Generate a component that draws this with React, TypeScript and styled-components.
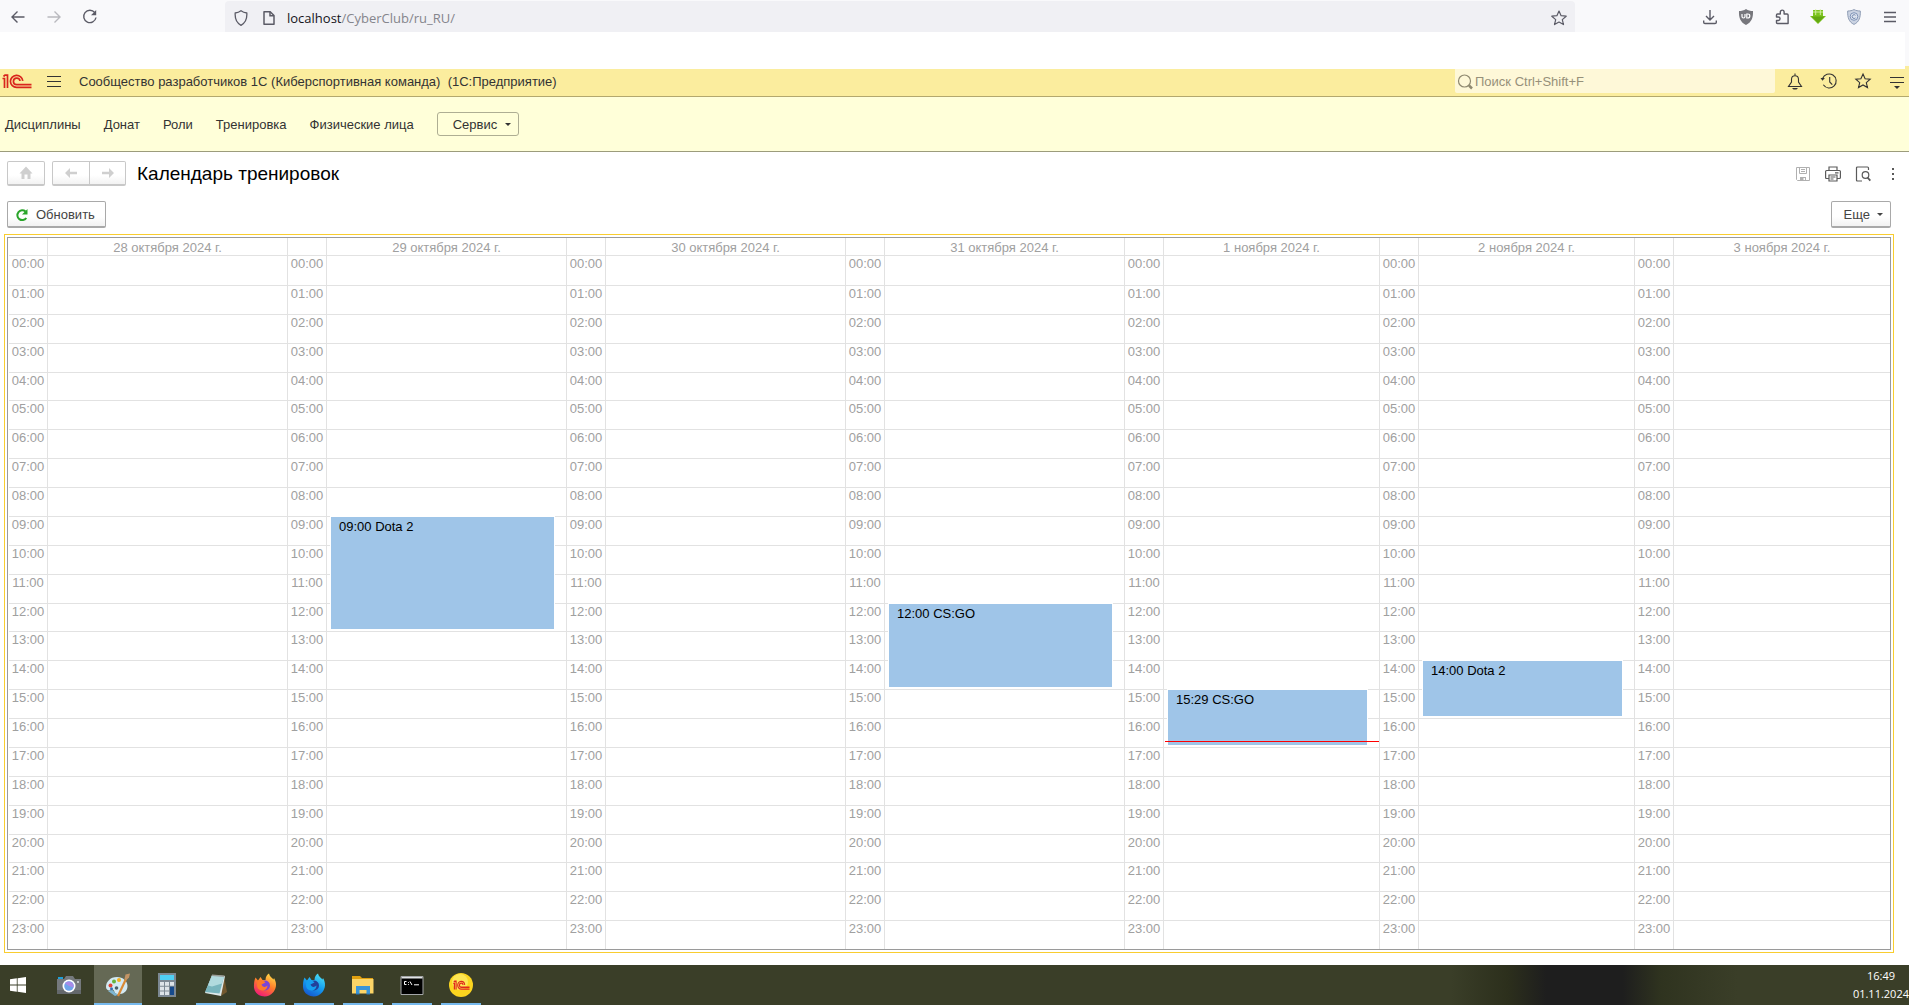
import React from "react";
import styled, { createGlobalStyle, css } from "styled-components";

const ui = `"Liberation Sans", Arial, sans-serif`;
const system = `"Open Sans", "Noto Sans", sans-serif`;

const GlobalStyle = createGlobalStyle`
  *, *::before, *::after { box-sizing: border-box; }
  body { margin: 0; background: #fff; font: 13px/16px ${ui}; color: #333; }
  button, input { font: inherit; color: inherit; margin: 0; }
  svg { display: block; flex: none; }
`;

const Page = styled.div`
  display: flex;
  flex-direction: column;
  min-height: 100vh;
`;

/* ---------- browser chrome ---------- */

const BrowserBar = styled.header`
  display: flex;
  align-items: stretch;
  height: 32px;
  background: #f9f9fb;
  color: #5b5b66;
`;

const BrowserNav = styled.div`
  display: flex;
  align-items: center;
  gap: 20px;
  width: 225px;
  padding-left: 10px;
  padding-top: 2px;
`;

const IconButton = styled.button<{ $size?: number; $faded?: boolean }>`
  display: flex;
  align-items: center;
  justify-content: center;
  width: ${(p) => p.$size ?? 16}px;
  height: ${(p) => p.$size ?? 16}px;
  padding: 0;
  border: 0;
  background: none;
  opacity: ${(p) => (p.$faded ? 0.4 : 1)};
`;

const UrlBar = styled.div`
  display: flex;
  flex: 1;
  align-items: center;
  gap: 12px;
  margin-top: 1px;
  padding: 2px 8px 0;
  border-radius: 4px 4px 0 0;
  background: #f0f0f4;
`;

const UrlText = styled.div`
  flex: 1;
  margin-left: -2px;
  font: 13px/18px ${system};
  color: #85858c;
  outline: 0;
  & > span { color: #15141a; }
`;

const BrowserTools = styled.div`
  display: flex;
  align-items: center;
  justify-content: flex-end;
  gap: 20px;
  width: 334px;
  padding: 2px 11px 0 0;
`;

const ChromeGap = styled.div`
  display: flex;
  justify-content: flex-end;
  height: 37px;
  &::after {
    content: "";
    width: 4px;
    background: linear-gradient(#f9f9fb 34px, #fbed9e 34px);
  }
`;

/* ---------- application header ---------- */

const AppBar = styled.div`
  display: flex;
  align-items: flex-start;
  height: 28px;
  background: #fbed9e;
  border-bottom: 1px solid #b3a86d;
`;

const AppTitle = styled.div`
  display: flex;
  flex: 1;
  align-items: center;
  height: 25px;
  padding-left: 2px;
`;

const MenuButton = styled(IconButton)`
  margin: 0 18px 0 15px;
`;

const Search = styled.label`
  display: flex;
  align-items: center;
  gap: 2px;
  width: 320px;
  height: 24px;
  padding: 1px 0 0 2px;
  border-radius: 0 0 2px 2px;
  background: #fef8d8;
`;

const SearchInput = styled.input`
  flex: 1;
  padding: 0;
  border: 0;
  outline: 0;
  background: none;
  &::placeholder { color: #96907a; opacity: 1; }
`;

const AppTools = styled.div`
  display: flex;
  align-items: center;
  justify-content: flex-end;
  gap: 14px;
  width: 134px;
  height: 24px;
  padding-right: 2px;
`;

const Sections = styled.nav`
  display: flex;
  align-items: center;
  gap: 23px;
  height: 55px;
  padding-left: 5px;
  background: #ffffd9;
  border-bottom: 1px solid #9c9c7c;
`;

const SectionLink = styled.a`
  padding-top: 1px;
  color: #333;
  text-decoration: none;
`;

const ServiceButton = styled.button`
  display: flex;
  align-items: center;
  gap: 8px;
  height: 24px;
  padding: 1px 7px 0 15px;
  border: 1px solid #aeae93;
  border-radius: 3px;
  background: #ffffd9;
`;

const Caret = styled.span`
  border: 3px solid transparent;
  border-top-color: currentColor;
  border-bottom: 0;
`;

/* ---------- form ---------- */

const Form = styled.main`
  display: flex;
  flex: 1;
  flex-direction: column;
  padding: 9px 15px 12px 4px;
`;

const FormHead = styled.div`
  display: flex;
  align-items: center;
  height: 25px;
  padding-left: 3px;
`;

const raised = css`
  border: 1px solid #b0b0b0;
  border-bottom: 2px solid #a0a0a0;
  border-radius: 2px;
  background: linear-gradient(#fff 60%, #f2f2f2);
`;

const NavButton = styled.button`
  ${raised};
  display: flex;
  align-items: center;
  justify-content: center;
  width: 38px;
  height: 25px;
  padding: 0;
  border-color: #c8c8c8;
  color: #cfcfcf;
`;

const NavPair = styled.div`
  display: flex;
  margin: 0 11px 0 7px;
  & > button { border-radius: 2px 0 0 2px; }
  & > button + button { border-left: 0; border-radius: 0 2px 2px 0; width: 36px; }
`;

const Title = styled.h1`
  flex: 1;
  margin: 0;
  font: 19px/24px ${ui};
  color: #000;
`;

const FormTools = styled.div`
  display: flex;
  align-items: center;
  gap: 14px;
  margin-right: -7px;
  color: #5a5a5a;
`;

const Commands = styled.div`
  display: flex;
  justify-content: space-between;
  margin: 15px 3px 6px;
`;

const CommandButton = styled.button`
  ${raised};
  display: flex;
  align-items: center;
  gap: 7px;
  height: 27px;
  padding: 1px 10px 0 7px;
  border-color: #a9a9a9;
  color: #444;
`;

const MoreButton = styled(CommandButton)`
  padding: 1px 7px 0 12px;
`;

/* ---------- calendar ---------- */

const line = "1px solid #e2e2e2";

const Focus = styled.div`
  display: flex;
  flex: 1;
  padding: 2px;
  border: 1px solid #f9cd2f;
`;

const Calendar = styled.table`
  display: grid;
  flex: 1;
  grid-template-columns: repeat(4, 39px minmax(0, 10fr)) repeat(3, 39px minmax(0, 9fr));
  grid-template-rows: 18px repeat(24, minmax(18px, 1fr));
  padding-left: 1px;
  border: 1px solid #9a9a9a;
  color: #a0a0a0;
`;

const Rows = styled.tbody`
  display: contents;
`;

const Head = styled.thead`
  display: contents;
`;

const Row = styled.tr`
  display: contents;
  &:first-child > * { border-top: 0; }
`;

const DayName = styled.th`
  padding: 2px 0 0;
  border-right: ${line};
  border-bottom: ${line};
  font-weight: normal;
  text-align: center;
  line-height: 15px;
  &:last-child { border-right: 0; }
`;

const Hour = styled.th`
  padding: 0;
  border-top: ${line};
  border-right: ${line};
  font-weight: normal;
  text-align: center;
  line-height: 16px;
`;

const Slot = styled.td`
  position: relative;
  padding: 0;
  border-top: ${line};
  border-right: ${line};
  &:last-child { border-right: 0; }
`;

const Event = styled.div<{ $hours: number }>`
  position: absolute;
  z-index: 1;
  top: 0;
  left: 4px;
  right: 12px;
  height: calc((100% + 1px) * ${(p) => p.$hours} - 3px);
  padding: 2px 8px;
  background: #9fc5e8;
  box-shadow: 0 0 0 1px #fff;
  color: #000;
`;

const Now = styled.div<{ $minute: number }>`
  position: absolute;
  z-index: 2;
  top: calc(100% * ${(p) => p.$minute} / 60 - 1px);
  left: 1px;
  right: 0;
  height: 1px;
  background: #f00;
`;

/* ---------- taskbar ---------- */

const Taskbar = styled.footer`
  display: flex;
  align-items: stretch;
  height: 40px;
  background: linear-gradient(90deg, #3a3e28 76%, #2c2f1c 79%, #1e1e1e 81%, #1e1e1e 85%, #2f331f 87%, #3a3e28 91%);
`;

const StartButton = styled.button`
  display: flex;
  align-items: center;
  width: 45px;
  padding: 0 0 0 10px;
  border: 0;
  background: none;
`;

const Tasks = styled.div`
  display: flex;
  flex: 1;
  gap: 1px;
`;

const Task = styled.button<{ $state?: "open" | "active" }>`
  display: flex;
  align-items: center;
  justify-content: center;
  width: 48px;
  padding: 0;
  border: 0;
  background:
    linear-gradient(#76b9ed, #76b9ed) bottom / ${(p) => (p.$state === "active" ? "48px" : p.$state === "open" ? "40px" : "0")} 2px no-repeat,
    ${(p) => (p.$state === "active" ? "#656955" : "transparent")};
`;

const Clock = styled.time`
  display: flex;
  flex-direction: column;
  align-items: center;
  padding-top: 2px;
  font: 11px/18px ${system};
  color: #fff;
`;

/* ---------- drawings ---------- */

type IconProps = { size?: number; children: React.ReactNode; w?: number; box?: string; stroke?: number };
const Svg = ({ size = 16, w, box = "0 0 16 16", stroke = 1, children }: IconProps) => (
  <svg width={w ?? size} height={size} viewBox={box} fill="none" stroke="currentColor" strokeWidth={stroke} aria-hidden>
    {children}
  </svg>
);

const Back = () => <Svg stroke={1.4}><path d="M14.5 8H2M7.5 2.5L2 8l5.500 5.500" /></Svg>;
const Forward = () => <Svg stroke={1.4}><path d="M1.500 8H14M8.500 2.500L14 8l-5.500 5.500" /></Svg>;
const Reload = () => <Svg stroke={1.4}><path d="M12.800 3.600A6.200 6.200 0 1 0 14 8.500" /><path d="M14.200 1v5.200H9z" fill="currentColor" stroke="none" /></Svg>;
const Shield = () => <Svg stroke={1.3}><path d="M8 .8c1.800 1.400 3.600 2 5.800 2.200C14.200 8.500 12.500 13 8 15.300 3.500 13 1.800 8.500 2.200 3 4.400 2.800 6.200 2.200 8 .8z" /></Svg>;
const Doc = () => <Svg stroke={1.5}><path d="M3 1.700h6.200L13 5.500v8.800H3z" strokeLinejoin="round" /><path d="M9 1.700v4h4" /></Svg>;
const starPath = "M8 1l2.100 4.700 5.100.5-3.900 3.400 1.200 5L8 12l-4.500 2.600 1.200-5L.8 6.200l5.100-.5z";
const Star = ({ stroke = 1.2 }) => <Svg stroke={stroke}><path d={starPath} strokeLinejoin="round" /></Svg>;
const Download = () => <Svg stroke={1.4}><path d="M8 1v9.500M4 7l4 4 4-4M1.700 11.500v1.700q0 1.300 1.300 1.300h10q1.300 0 1.300-1.300v-1.700" /></Svg>;
const Ublock = () => (
  <Svg>
    <path d="M8 0c2 1.500 4.500 2 7 2 .3 6-1 11-7 14C2 13 .7 8 1 2c2.500 0 5-.5 7-2z" fill="#77777c" stroke="none" />
    <path d="M4 5v2.500q0 1.500 1.500 1.500T7 7.500V5M8.800 5v4h1q2 0 2-2t-2-2z" stroke="#fff" strokeWidth="1.200" />
  </Svg>
);
const Puzzle = () => <Svg stroke={1.4}><path d="M2.500 8V6q0-1 1-1H6.300V3a1.900 1.900 0 0 1 3.800 0v2h3q1 0 1 1v8.500H3.500q-1 0-1-1v-2h1.800a1.700 1.700 0 0 0 0-3.500z" strokeLinejoin="round" /></Svg>;
const GreenArrow = () => (
  <Svg>
    <path d="M3 1h10v6h3l-8 8-8-8h3z" fill="#7cc41f" stroke="none" />
    <path d="M3 3h10M5.700 0v6M10.300 0v6" stroke="#d8f0a8" strokeWidth=".9" />
    <path d="M1.500 7.500h13L8 14z" fill="#64a812" stroke="none" />
  </Svg>
);
const BlueShield = () => (
  <Svg>
    <path d="M8 .6C10 1.600 12 2 14.300 2 14.600 8 13.300 13 8 15.400 2.700 13 1.400 8 1.700 2 4 2 6 1.600 8 .6z" fill="#cbd3e2" stroke="#8f9db5" />
    <circle cx="8" cy="7.500" r="3.800" fill="#dfe5ef" stroke="#8094b8" />
    <path d="M9.500 6.300a1.900 1.900 0 1 0 0 2.600" stroke="#7086ad" />
  </Svg>
);
const Burger = () => <Svg stroke={1.5}><path d="M2 3.500h12M2 8h12M2 12.500h12" /></Svg>;

const logoOne = "M.5 4.500H2.500V14M1.500 2.500L3 1.200H5.500V14";
const logoC = "M20.800 6.800A6.200 6 0 1 0 14.600 13.400H29.500M18 7A3.300 3.200 0 1 0 14.600 10.600H29.500";
const Logo = () => (
  <svg width="30" height="15" viewBox="0 0 30 15" fill="none" stroke="#d9251d" strokeWidth="1.700" role="img" aria-label="1С">
    <path d={logoOne} />
    <path d={logoC} />
  </svg>
);
const AppMenu = () => <Svg box="0 0 14 14" size={14}><path d="M0 1.500h14M0 6.500h14M0 11.500h14" stroke="#333" /></Svg>;
const Magnifier = () => <Svg stroke={1.2}><g stroke="#8f8970"><circle cx="7.500" cy="7" r="6" /><path d="M12 11.500l3 3" strokeWidth="2.500" /></g></Svg>;
const Bell = () => <Svg size={20} box="0 0 20 20" stroke={1.1}><path d="M3.500 15.500h13L13.500 11V8.500q0-3.700-3.500-3.700T6.500 8.500V11zM10 2.500v2.300" /><path d="M7 17h6l-1.500 1.500h-3z" fill="currentColor" stroke="none" /></Svg>;
const History = () => <Svg size={20} box="0 0 20 20" stroke={1.1}><path d="M3.600 7.500A7 7 0 1 1 4.300 13.800M10.700 6v5l2.600 2.600" /><path d="M1.500 7h4.400L3.500 9.800z" fill="currentColor" stroke="none" /></Svg>;
const BigStar = () => <Svg size={20} box="-2 -2 20 20" stroke={1.1}><path d={starPath} /></Svg>;
const Options = () => <Svg size={20} box="0 0 20 20"><path d="M3 6.500h14M3 11.500h14" /><path d="M7 15h6l-3 3z" fill="currentColor" stroke="none" /></Svg>;

const Home = () => <Svg><path d="M8 1.500L1.500 8.500H3.500V14H6.500V9.500h3V14h3V8.500h2z" fill="currentColor" stroke="none" /></Svg>;
const ArrowL = () => <Svg><path d="M2 8l5-5v3.800h7v2.400H7V13z" fill="currentColor" stroke="none" /></Svg>;
const ArrowR = () => <Svg><path d="M14 8L9 3v3.800H2v2.400h7V13z" fill="currentColor" stroke="none" /></Svg>;
const Refresh = () => <Svg size={14} box="0 0 14 14" stroke={2}><g stroke="#2aa52a"><path d="M10.500 3.500A4.900 4.900 0 1 0 11.300 10" /><path d="M12.500 1v5.500H7z" fill="#2aa52a" stroke="none" /></g></Svg>;
const Save = () => <Svg><g stroke="#b0b0b0"><path d="M1.500 1.500h13v13h-12l-1-1z" /><path d="M4.500 1.500v6h7v-6M6 3.500h4M6 5.500h4" /><path d="M5 11h6v4H5z" fill="#b0b0b0" stroke="none" /><path d="M8.500 12h1.500v2H8.500z" fill="#fff" stroke="none" /></g></Svg>;
const Print = () => <Svg stroke={1.2}><path d="M4 4.500V1h8v3.500M4 12.500H1.600q-1 0-1-1v-6q0-1 1-1h12.800q1 0 1 1v6q0 1-1 1H12M4 9h8v6H4zM5.500 11h5M5.500 13h3M10 6.800h3.500" /></Svg>;
const Preview = () => <Svg stroke={1.2}><path d="M7 15H2.500q-1 0-1-1V2q0-1 1-1h10q1 0 1 1v2" /><circle cx="10.500" cy="9" r="3.300" /><path d="M12.500 11.500l2.800 3.200" strokeWidth="1.800" /></Svg>;
const Dots = () => <Svg><path d="M7 2h2v2H7zM7 7h2v2H7zM7 12h2v2H7z" fill="currentColor" stroke="none" /></Svg>;

const Windows = () => <Svg><path d="M0 2.300l6.800-1v6.300H0zM7.600 1.200L16 0v7.600H7.600zM0 8.400h6.800v6.300l-6.800-1zM7.600 8.400H16V16l-8.400-1.200z" fill="#fff" stroke="none" /></Svg>;

const Camera = () => (
  <Svg size={24} box="0 0 24 24">
    <g stroke="none">
      <path d="M1 4h5v3H1z" fill="#1f9fd8" />
      <path d="M0 6h7l2-3h7l2 3h6v15H0z" fill="#75797d" />
      <path d="M0 17h24v4H0z" fill="#64686c" />
      <circle cx="12" cy="13" r="6.500" fill="#fff" />
      <circle cx="12" cy="13" r="4.800" fill="#6fa4ea" />
      <path d="M8 10.500a4.800 4.800 0 0 1 8.500 4L12 13z" fill="#a98be8" />
      <path d="M20 8h2v2h-2z" fill="#bfc3c6" />
    </g>
  </Svg>
);
const Paint = () => (
  <Svg size={24} box="0 0 24 24">
    <g stroke="none">
      <path d="M11 4C4 4 0 9 0 14c0 3 3 4 5 3s3 0 3.500 2c1 4 13 3 13-6C21.500 8 17 4 11 4z" fill="#d3eaf4" />
      <path d="M2 18c2 0 4-2 5.500 0S10 22 15 20.500L9 23z" fill="#7db6d1" />
      <circle cx="4.500" cy="12.500" r="2" fill="#df4437" />
      <circle cx="8" cy="8.500" r="2" fill="#66b33e" />
      <circle cx="13" cy="7" r="2" fill="#f2b01e" />
      <circle cx="5.500" cy="15.800" r="1.500" fill="#356fb5" />
      <circle cx="10.500" cy="15" r="1.800" fill="#4b5f6b" />
    </g>
    <path d="M12 23L20 6" stroke="#d98a35" strokeWidth="2.200" />
    <path d="M18.500 6l1-4.500L24 .5l-1 4-2.500 2.500z" fill="#c39465" stroke="none" />
  </Svg>
);
const Calculator = () => (
  <Svg size={24} w={18} box="0 0 18 24">
    <g stroke="none">
      <path d="M0 0h18v24H0z" fill="#7c8893" />
      <path d="M2 2h14v5H2z" fill="#4fd0f5" />
      <path d="M2 9h4v3.700H2zM7 9h4v3.700H7zM12 9h4v3.700h-4zM2 13.700h4v3.700H2zM7 13.700h4v3.700H7zM2 18.400h4V22H2zM7 18.400h4V22H7z" fill="#dde3e8" />
      <path d="M12 13.700h4V22h-4z" fill="#164a8c" />
    </g>
  </Svg>
);
const Notepad = () => (
  <Svg size={24} box="0 0 24 24">
    <g stroke="none">
      <path d="M20 3l3 16-6 4z" fill="#73582f" />
      <path d="M8 2l13 1-4 20-16-3z" fill="#dfe9ea" />
      <path d="M8 2.500l12 1-4.500 17L1 19z" fill="#78b5bd" />
      <path d="M8 2.500l12 1-2 7-10 3-4-1z" fill="#b1dade" />
      <path d="M8 1.500l12.500 1v1.500L8 3z" fill="#9b9d98" />
    </g>
  </Svg>
);
const Fox = ({ blue = false }) => {
  const id = blue ? "foxBlue" : "foxRed";
  const [a, b, c, core] = blue ? ["#4fe3f5", "#159ff0", "#1557cf", "#23409a"] : ["#ffe14a", "#ff7a2a", "#f0197a", "#7a45d8"];
  return (
    <Svg size={24} box="0 0 24 24">
      <defs>
        <linearGradient id={id} x1=".8" y1="0" x2=".3" y2="1"><stop stopColor={a} /><stop offset=".5" stopColor={b} /><stop offset="1" stopColor={c} /></linearGradient>
      </defs>
      <g stroke="none">
        <path d="M2.500 4.500l2.500 3L7.500 4l2 3h3c0-3 1.500-5.500 3.500-6.500.5 3 3 4 4.500 6l.5-1.500c3 5 2.500 10-.5 14C17 23.500 12 24 8.500 23 3 21.500.5 17 1 12c0-3 .5-5 1.500-7.500z" fill={`url(#${id})`} />
        <circle cx="12" cy="12.500" r="5" fill={core} />
        <path d="M5 7.500c3-1 6 0 7.500 2l-4 2c1 3 4 3 6 1 0 4-4 6-7.500 4.500C3.500 15.500 3.500 11 5 7.500z" fill={b} />
      </g>
    </Svg>
  );
};
const Explorer = () => (
  <Svg size={24} box="0 0 24 24">
    <g stroke="none">
      <path d="M1 3h8l2 2h11v15H1z" fill="#e0a010" />
      <path d="M1 6h21.500v14.500H1z" fill="#fbd467" />
      <path d="M5 13h14v8h-3.500v-4h-7v4H5z" fill="#3a95d8" />
      <path d="M5 20.500h3.500v1H5zM15.500 20.500H19v1h-3.500z" fill="#2777b8" />
    </g>
  </Svg>
);
const Console = () => (
  <Svg size={24} box="0 0 24 24">
    <path d="M1 3.500h22v18H1z" fill="#000" stroke="#a4a6a8" />
    <path d="M1.500 4h21v1.500h-21z" fill="#e2e4e5" stroke="none" />
    <path d="M6.500 8.500H4.500v3h2M8.500 9v.8M8.500 11v.8M10 8.500l2 3.500M14 11.800h5" stroke="#fff" />
  </Svg>
);
const OneC = () => (
  <Svg size={24} box="0 0 24 24">
    <circle cx="12" cy="12" r="12" fill="#fbd51f" stroke="none" />
    <circle cx="11" cy="9" r="8" fill="#fde655" stroke="none" />
    <g transform="translate(4 7.500) scale(.56 .64)" stroke="#e0281c" strokeWidth="2.100">
      <path d={logoOne} />
      <path d={logoC} />
    </g>
  </Svg>
);

/* ---------- data ---------- */

const sections = ["Дисциплины", "Донат", "Роли", "Тренировка", "Физические лица"];

const days = [
  "28 октября 2024 г.",
  "29 октября 2024 г.",
  "30 октября 2024 г.",
  "31 октября 2024 г.",
  "1 ноября 2024 г.",
  "2 ноября 2024 г.",
  "3 ноября 2024 г.",
];

const trainings = [
  { day: 1, row: 9, hours: 4, text: "09:00 Dota 2" },
  { day: 3, row: 12, hours: 3, text: "12:00 CS:GO" },
  { day: 4, row: 15, hours: 2, text: "15:29 CS:GO" },
  { day: 5, row: 14, hours: 2, text: "14:00 Dota 2" },
];

const now = { day: 4, hour: 16, minute: 49 };

const hours = Array.from({ length: 24 }, (_, h) => h);

const tasks: { name: string; icon: React.ReactNode; state?: "open" | "active" }[] = [
  { name: "Камера", icon: <Camera /> },
  { name: "Paint", icon: <Paint />, state: "active" },
  { name: "Калькулятор", icon: <Calculator /> },
  { name: "Блокнот", icon: <Notepad />, state: "open" },
  { name: "Firefox", icon: <Fox />, state: "open" },
  { name: "Firefox Developer Edition", icon: <Fox blue />, state: "open" },
  { name: "Проводник", icon: <Explorer />, state: "open" },
  { name: "Командная строка", icon: <Console />, state: "open" },
  { name: "1С:Предприятие", icon: <OneC />, state: "open" },
];

export default function App() {
  return (
    <Page>
      <GlobalStyle />
      <BrowserBar>
        <BrowserNav>
          <IconButton aria-label="Назад"><Back /></IconButton>
          <IconButton aria-label="Вперёд" $faded><Forward /></IconButton>
          <IconButton aria-label="Обновить страницу"><Reload /></IconButton>
        </BrowserNav>
        <UrlBar>
          <Shield />
          <Doc />
          <UrlText role="textbox" aria-label="Адрес" contentEditable suppressContentEditableWarning spellCheck={false}>
            <span>localhost</span>/CyberClub/ru_RU/
          </UrlText>
          <IconButton aria-label="Добавить в закладки"><Star /></IconButton>
        </UrlBar>
        <BrowserTools>
          <IconButton aria-label="Загрузки"><Download /></IconButton>
          <IconButton aria-label="uBlock"><Ublock /></IconButton>
          <IconButton aria-label="Расширения"><Puzzle /></IconButton>
          <IconButton aria-label="Скачать"><GreenArrow /></IconButton>
          <IconButton aria-label="Защита"><BlueShield /></IconButton>
          <IconButton aria-label="Меню браузера"><Burger /></IconButton>
        </BrowserTools>
      </BrowserBar>
      <ChromeGap />

      <AppBar>
        <AppTitle>
          <Logo />
          <MenuButton $size={14} aria-label="Главное меню"><AppMenu /></MenuButton>
          Сообщество разработчиков 1С (Киберспортивная команда)&nbsp; (1С:Предприятие)
        </AppTitle>
        <Search>
          <Magnifier />
          <SearchInput aria-label="Поиск" placeholder="Поиск Ctrl+Shift+F" />
        </Search>
        <AppTools>
          <IconButton $size={20} aria-label="Уведомления"><Bell /></IconButton>
          <IconButton $size={20} aria-label="История"><History /></IconButton>
          <IconButton $size={20} aria-label="Избранное"><BigStar /></IconButton>
          <IconButton $size={20} aria-label="Настройки"><Options /></IconButton>
        </AppTools>
      </AppBar>
      <Sections>
        {sections.map((name) => (
          <SectionLink key={name} href="#">{name}</SectionLink>
        ))}
        <ServiceButton>Сервис<Caret /></ServiceButton>
      </Sections>

      <Form>
        <FormHead>
          <NavButton aria-label="Начальная страница"><Home /></NavButton>
          <NavPair>
            <NavButton aria-label="Предыдущая"><ArrowL /></NavButton>
            <NavButton aria-label="Следующая"><ArrowR /></NavButton>
          </NavPair>
          <Title>Календарь тренировок</Title>
          <FormTools>
            <IconButton aria-label="Сохранить"><Save /></IconButton>
            <IconButton aria-label="Печать"><Print /></IconButton>
            <IconButton aria-label="Просмотр"><Preview /></IconButton>
            <IconButton aria-label="Действия"><Dots /></IconButton>
          </FormTools>
        </FormHead>
        <Commands>
          <CommandButton><Refresh />Обновить</CommandButton>
          <MoreButton>Еще<Caret /></MoreButton>
        </Commands>
        <Focus>
          <Calendar>
            <Head>
              <Row>
                {days.map((day) => (
                  <React.Fragment key={day}>
                    <DayName aria-label="Время" />
                    <DayName scope="col">{day}</DayName>
                  </React.Fragment>
                ))}
              </Row>
            </Head>
            <Rows>
              {hours.map((h) => (
                <Row key={h}>
                  {days.map((day, d) => {
                    const training = trainings.find((t) => t.day === d && t.row === h);
                    return (
                      <React.Fragment key={day}>
                        <Hour scope="row">{String(h).padStart(2, "0")}:00</Hour>
                        <Slot>
                          {training && <Event $hours={training.hours}>{training.text}</Event>}
                          {now.day === d && now.hour === h && <Now $minute={now.minute} />}
                        </Slot>
                      </React.Fragment>
                    );
                  })}
                </Row>
              ))}
            </Rows>
          </Calendar>
        </Focus>
      </Form>

      <Taskbar>
        <StartButton aria-label="Пуск"><Windows /></StartButton>
        <Tasks>
          {tasks.map((t) => (
            <Task key={t.name} aria-label={t.name} $state={t.state}>{t.icon}</Task>
          ))}
        </Tasks>
        <Clock dateTime="2024-11-01T16:49">
          <span>16:49</span>
          <span>01.11.2024</span>
        </Clock>
      </Taskbar>
    </Page>
  );
}
